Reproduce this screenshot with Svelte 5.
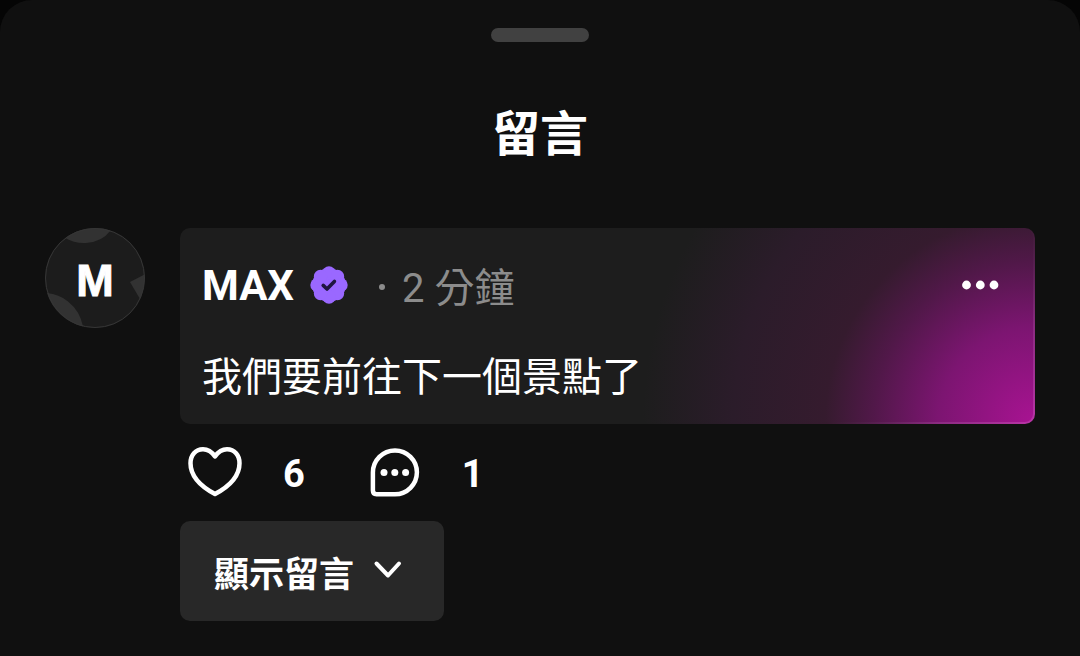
<script lang="ts">
  const comment = {
    author: 'MAX',
    initial: 'M',
    age: '2 分鐘',
    text: '我們要前往下一個景點了',
    likes: 6,
    replies: 1,
  };
  let liked = $state(false);
</script>

<main class="sheet">
  <div class="handle"></div>
  <h1>留言</h1>

  <article class="comment">
    <div class="avatar">
      <svg viewBox="0 0 100 100" aria-hidden="true">
        <circle cx="50" cy="50" r="50" fill="#1c1c1c" />
        <path d="M20.500 10 A50 50 0 0 1 65.500 2.500 Q57 14 41 15 Q29 15.500 20.500 10Z" fill="#323232" />
        <path d="M2 65 A50 50 0 0 0 38 98.500 Q35 83 23 73.500 Q14 66 2 65Z" fill="#323232" />
        <path d="M85 54 L99.500 46.500 A50 50 0 0 1 95 71Z" fill="#323232" />
        <circle cx="50" cy="50" r="49.500" fill="none" stroke="#363636" />
      </svg>
      <span>{comment.initial}</span>
    </div>

    <div class="body">
      <section class="card">
        <header>
          <strong>{comment.author}</strong>
          <svg class="badge" viewBox="0 0 38 38" role="img" aria-label="已驗證">
            <g fill="#9a68ff">
              <circle cx="19" cy="19" r="16.800" />
              {#each Array(8) as _, i}
                <circle cx="19" cy="7" r="6.700" transform="rotate({i * 45} 19 19)" />
              {/each}
            </g>
            <path d="M13.200 19.400 L17 23 L24.400 15.400" fill="none" stroke="#1f1540" stroke-width="3.600" stroke-linecap="round" stroke-linejoin="round" />
          </svg>
          <i class="dot"></i>
          <time>{comment.age}</time>
          <button class="more" aria-label="更多">
            <svg viewBox="0 0 38 10" aria-hidden="true">
              <circle cx="5.500" cy="5" r="4.400" /><circle cx="19.300" cy="5" r="4.400" /><circle cx="33" cy="5" r="4.400" />
            </svg>
          </button>
        </header>
        <p>{comment.text}</p>
      </section>

      <div class="actions">
        <button class="like" aria-label="讚" aria-pressed={liked} onclick={() => (liked = !liked)}>
          <svg viewBox="0 0 54 50" aria-hidden="true">
            <path d="M27 9.500 C23.500 4.500 19.500 2.300 15 2.300 C7.500 2.300 2.500 8.300 2.500 16.200 C2.500 29 13 39.500 27 47 C41 39.500 51.500 29 51.500 16.200 C51.500 8.300 46.500 2.300 39 2.300 C34.500 2.300 30.500 4.500 27 9.500Z" />
          </svg>
          <span>{comment.likes + (liked ? 1 : 0)}</span>
        </button>
        <button class="reply" aria-label="回覆">
          <svg viewBox="0 0 54 50" aria-hidden="true">
            <path d="M28 3.400 A21.800 21.800 0 0 1 28 47.200 H9.500 Q5.900 47.200 5.900 43.600 V25.500 A22.100 22.100 0 0 1 28 3.400Z" />
            <g class="dots"><circle cx="17" cy="25.500" r="3.500" /><circle cx="27.800" cy="25.500" r="3.500" /><circle cx="38.600" cy="25.500" r="3.500" /></g>
          </svg>
          <span>{comment.replies}</span>
        </button>
      </div>

      <button class="show">
        顯示留言
        <svg viewBox="0 0 28 18" aria-hidden="true"><path d="M2.500 1.500 L14 13.500 L25 1.500" /></svg>
      </button>
    </div>
  </article>
</main>

<style>
  :global(body) {
    margin: 0;
    background: #050505;
  }
  .sheet {
    box-sizing: border-box;
    min-height: 100vh;
    padding: 28px 45px 35px;
    border-radius: 32px 32px 0 0;
    background: #101010;
    color: #fff;
    font-family: Roboto, 'Noto Sans CJK TC', sans-serif;
  }
  .handle {
    width: 98px;
    height: 14px;
    margin: 0 auto;
    border-radius: 7px;
    background: #414141;
  }
  h1 {
    margin: 58px 0 0;
    font-size: 48px;
    line-height: 70px;
    font-weight: 700;
    text-align: center;
  }
  .comment {
    display: flex;
    gap: 35px;
    margin-top: 58px;
  }
  .avatar {
    display: grid;
    flex: none;
    width: 100px;
    height: 100px;
    place-items: center;
  }
  .avatar > * {
    grid-area: 1 / 1;
  }
  .avatar svg {
    width: 100px;
    height: 100px;
    overflow: visible;
  }
  .avatar span {
    padding-top: 6px;
    font: 700 45px/50px 'Liberation Sans', Arial, sans-serif;
    -webkit-text-stroke: 1px #fff;
  }
  .body {
    flex: 1;
    min-width: 0;
  }
  .card {
    padding: 28px 34px 14px 22px;
    border: solid transparent;
    border-width: 0 2px 2px 0;
    border-radius: 10px;
    background:
      radial-gradient(
        circle at 100% 100%,
        #a81392 0,
        #7c1571 95px,
        #511849 160px,
        #351b2e 208px,
        #2b1c2a 300px,
        #1d1d1d 390px
      ) padding-box,
      radial-gradient(
        circle at 100% 100%,
        #b934a6 0,
        #8c2b82 95px,
        #571f50 160px,
        #351b2e 208px,
        #2b1c2a 300px,
        #1d1d1d 390px
      ) border-box;
  }
  header {
    display: flex;
    align-items: center;
    height: 58px;
  }
  strong {
    padding-top: 2px;
    font-size: 42px;
    line-height: 54px;
    font-weight: 700;
  }
  .badge {
    width: 38px;
    height: 38px;
    margin-left: 16px;
  }
  .dot {
    width: 6px;
    height: 6px;
    margin: 4px 17px 0 31px;
    border-radius: 50%;
    background: #8c8c8c;
  }
  time {
    padding-top: 8px;
    font-size: 40px;
    line-height: 54px;
    color: #8c8c8c;
  }
  button {
    padding: 0;
    border: 0;
    background: none;
    color: inherit;
    font: inherit;
    cursor: pointer;
  }
  .more {
    display: flex;
    margin-left: auto;
  }
  .more svg {
    width: 38px;
    height: 10px;
    fill: #fff;
  }
  p {
    margin: 34px 0 0;
    font-size: 40px;
    line-height: 60px;
  }
  .actions {
    display: flex;
    gap: 62px;
    padding: 22px 8px 23px;
  }
  .actions button {
    display: flex;
    align-items: center;
    gap: 41px;
    font-size: 38px;
    line-height: 48px;
    font-weight: 700;
  }
  .actions span {
    padding-top: 4px;
  }
  .actions svg {
    width: 54px;
    height: 50px;
    fill: none;
    stroke: #fff;
    stroke-width: 4.500;
    stroke-linejoin: round;
  }
  .actions .dots {
    fill: #fff;
    stroke: none;
  }
  .show {
    display: flex;
    align-items: center;
    gap: 20px;
    height: 100px;
    padding: 0 42px 0 34px;
    border-radius: 10px;
    background: #282828;
    font-size: 35px;
    font-weight: 700;
  }
  .show svg {
    width: 28px;
    height: 18px;
    fill: none;
    stroke: #fff;
    stroke-width: 4;
    stroke-linecap: round;
    stroke-linejoin: round;
    overflow: visible;
  }
</style>
